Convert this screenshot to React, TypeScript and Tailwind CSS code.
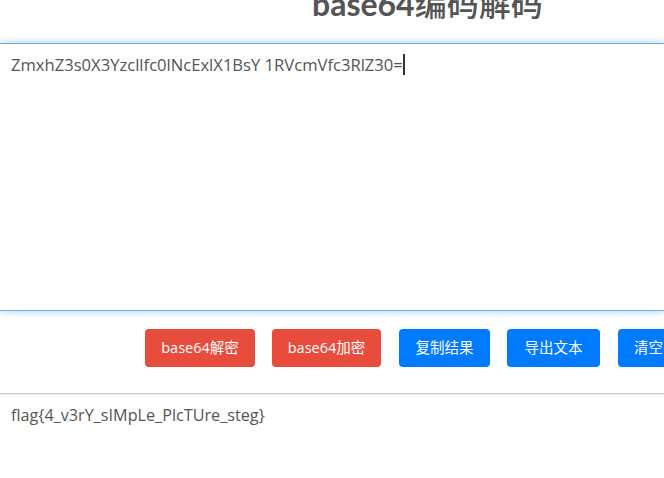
import React from 'react';

const buttons = [
  { label: 'base64解密', color: 'bg-[#e74c3c]', width: 'w-[110px]', gap: '' },
  { label: 'base64加密', color: 'bg-[#e74c3c]', width: 'w-[109px]', gap: 'ml-[17px]' },
  { label: '复制结果', color: 'bg-[#007bff]', width: 'w-[91px]', gap: 'ml-[18px]' },
  { label: '导出文本', color: 'bg-[#007bff]', width: 'w-[93px]', gap: 'ml-[17px]' },
  { label: '清空', color: 'bg-[#007bff]', width: 'w-[61px]', gap: 'ml-[18px]' },
];

const App: React.FC = () => {
  return (
    <div
      className="w-[664px] h-[478px] overflow-hidden bg-white text-[#555]"
      style={{ fontFamily: '"Open Sans", "Noto Sans CJK SC", sans-serif' }}
    >
      {/* title, scrolled partly out of view */}
      <div className="h-[43px] overflow-hidden">
        <h1
          className="pl-[312px] -mt-[13px] text-[32px] leading-[34px] whitespace-nowrap text-[#555]"
          style={{ fontFamily: 'Lato, "Noto Sans CJK SC", sans-serif' }}
        >
          <span className="font-bold">base64</span>
          <span className="font-medium">编码解码</span>
        </h1>
      </div>

      {/* input box (focused) */}
      <div className="h-[268px] border-y border-[#66afe9] shadow-[0_0_8px_rgba(102,175,233,0.6)] px-[11px] pt-[10px] text-[16.6px] leading-[22px] whitespace-nowrap">
        ZmxhZ3s0X3Yzcllfc0lNcExlX1BsY 1RVcmVfc3RlZ30=
        <span className="inline-block w-[2px] h-[21px] bg-[#333] align-[-4px]" />
      </div>

      {/* actions */}
      <div className="flex pl-[145px] pt-[18px] pb-[26px] whitespace-nowrap">
        {buttons.map(b => (
          <button
            key={b.label}
            className={`${b.color} ${b.width} ${b.gap} shrink-0 h-[38px] rounded-[4px] text-white text-[14.5px] flex items-center justify-center`}
          >
            {b.label}
          </button>
        ))}
      </div>

      {/* output box */}
      <div className="h-[100px] border-t border-[#ccc] shadow-[inset_0_1px_1px_rgba(0,0,0,0.075)] px-[11px] pt-[10px] text-[16.2px] leading-[22px] whitespace-nowrap">
        flag{'{'}4_v3rY_sIMpLe_PlcTUre_steg{'}'}
      </div>
    </div>
  );
};

export default App;
